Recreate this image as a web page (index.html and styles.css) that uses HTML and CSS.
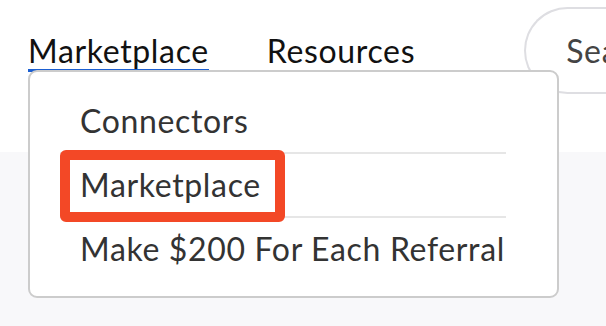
FILE: index.html
```html
<!DOCTYPE html>
<html>
<head>
<meta charset="utf-8">
<link rel="stylesheet" href="styles.css">
</head>
<body>
<header class="header">
  <nav class="nav">
    <a class="nav-link active">Marketplace</a>
    <a class="nav-link">Resources</a>
  </nav>
  <div class="search">Search</div>
  <div class="dropdown">
    <div class="item">Connectors</div>
    <div class="item current">Marketplace<span class="highlight"></span></div>
    <div class="item">Make $200 For Each Referral</div>
  </div>
</header>
</body>
</html>
```
FILE: styles.css
```css
html, body {
  margin: 0;
  padding: 0;
}
body {
  background: #f8f8fa;
  font-family: "Lato", "Liberation Sans", sans-serif;
  letter-spacing: 0.65px;
  width: 606px;
  height: 326px;
  overflow: hidden;
}
.header {
  position: relative;
  height: 152px;
  background: #ffffff;
  display: flex;
  align-items: flex-start;
  padding-left: 28px;
}
.nav {
  display: flex;
  gap: 58px;
  padding-top: 33px;
}
.nav-link {
  font-size: 32px;
  line-height: 36px;
  color: #111111;
  border-bottom: 3px solid transparent;
}
.nav-link.active {
  border-bottom-color: #1b5fd1;
}
.search {
  margin-left: 109px;
  margin-top: 7px;
  height: 83px;
  width: 200px;
  flex-shrink: 0;
  border: 2px solid #dedee2;
  border-right: none;
  border-radius: 44px 0 0 44px;
  box-sizing: content-box;
  padding-left: 40px;
  font-size: 32px;
  line-height: 83px;
  color: #444444;
  white-space: nowrap;
}
.dropdown {
  position: absolute;
  left: 28px;
  top: 70px;
  width: 446px;
  padding: 18px 51px 16px 30px;
  background: #ffffff;
  border: 2px solid #cccccc;
  border-radius: 9px;
}
.item {
  position: relative;
  font-size: 32px;
  line-height: 62px;
  height: 62px;
  padding-left: 20px;
  color: #333333;
  white-space: nowrap;
}
.item + .item {
  border-top: 2px solid #e6e6e6;
}
.highlight {
  position: absolute;
  z-index: 1;
  left: 0;
  top: -4px;
  width: 225px;
  height: 72px;
  box-sizing: border-box;
  border: 10px solid #f34826;
  border-radius: 6px;
}
```
